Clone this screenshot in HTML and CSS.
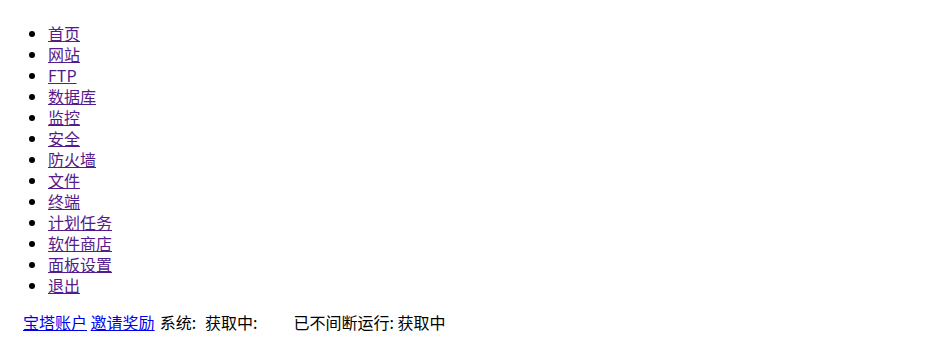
FILE: index.html
```html
<!DOCTYPE html>
<html lang="zh-CN">
<head>
<meta charset="utf-8">
<title>宝塔面板</title>
<link rel="stylesheet" href="styles.css">
</head>
<body>
<ul class="menu">
  <li><a class="visited" href="#">首页</a></li>
  <li><a class="visited" href="#">网站</a></li>
  <li><a class="visited" href="#">FTP</a></li>
  <li><a class="visited" href="#">数据库</a></li>
  <li><a class="visited" href="#">监控</a></li>
  <li><a class="visited" href="#">安全</a></li>
  <li><a class="visited" href="#">防火墙</a></li>
  <li><a class="visited" href="#">文件</a></li>
  <li><a class="visited" href="#">终端</a></li>
  <li><a class="visited" href="#">计划任务</a></li>
  <li><a class="visited" href="#">软件商店</a></li>
  <li><a class="visited" href="#">面板设置</a></li>
  <li><a class="visited" href="#">退出</a></li>
</ul>
<div class="footer">
  <a class="link" href="#">宝塔账户</a> <a class="link" href="#">邀请奖励</a><span class="label">系统:</span><span class="value">获取中:</span><span class="uptime">已不间断运行: 获取中</span>
</div>
</body>
</html>
```

FILE: styles.css
```css
body {
  margin: 8px;
  font-family: "Noto Sans CJK SC", "Liberation Sans", sans-serif;
  font-size: 16px;
  line-height: 21px;
  color: #000;
  background: #fff;
}
.menu {
  margin: 15px 0 16px;
  padding-left: 40px;
}
.visited {
  color: #551a8b;
}
.link {
  color: #0000ee;
}
.footer {
  padding-left: 15px;
  white-space: nowrap;
}
.label {
  margin-left: 5px;
}
.value {
  margin-left: 9px;
}
.uptime {
  margin-left: 36px;
}
```
